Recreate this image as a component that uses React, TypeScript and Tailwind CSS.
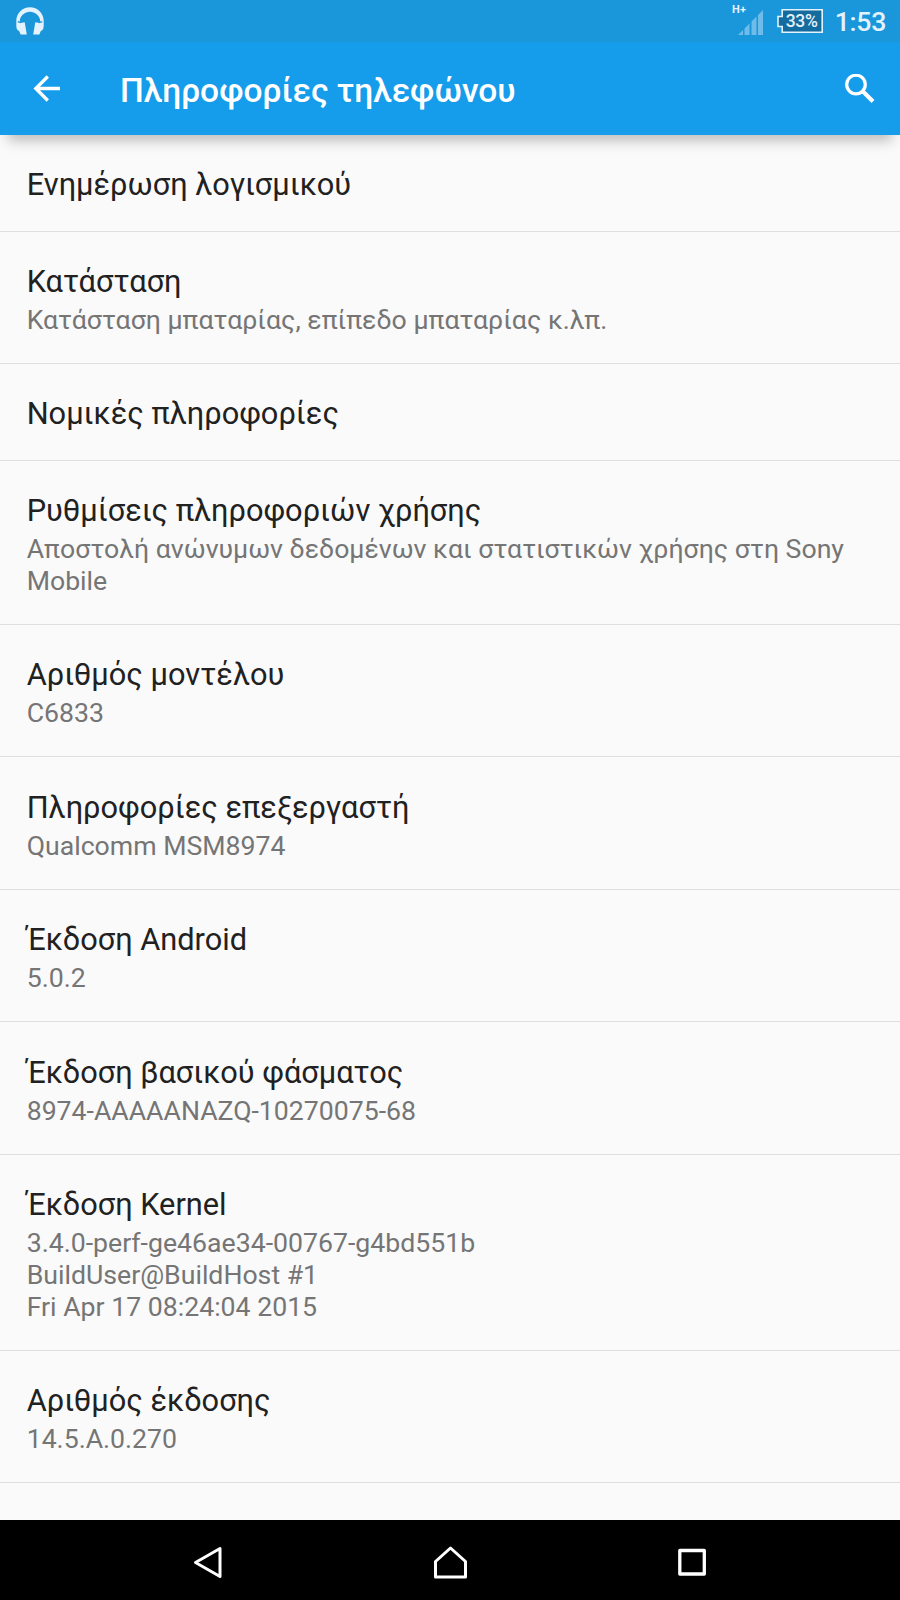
import { clsx } from "clsx";

interface InfoItem {
  title: string;
  summary?: string[];
  height: string;
}

const items: InfoItem[] = [
  { title: "Ενημέρωση λογισμικού", height: "h-[96.67px]" },
  {
    title: "Κατάσταση",
    summary: ["Κατάσταση μπαταρίας, επίπεδο μπαταρίας κ.λπ."],
    height: "h-[132.5px]",
  },
  { title: "Νομικές πληροφορίες", height: "h-[96.67px]" },
  {
    title: "Ρυθμίσεις πληροφοριών χρήσης",
    summary: ["Αποστολή ανώνυμων δεδομένων και στατιστικών χρήσης στη Sony Mobile"],
    height: "h-[164.17px]",
  },
  { title: "Αριθμός μοντέλου", summary: ["C6833"], height: "h-[132.5px]" },
  { title: "Πληροφορίες επεξεργαστή", summary: ["Qualcomm MSM8974"], height: "h-[132.5px]" },
  { title: "Έκδοση Android", summary: ["5.0.2"], height: "h-[132.5px]" },
  {
    title: "Έκδοση βασικού φάσματος",
    summary: ["8974-AAAAANAZQ-10270075-68"],
    height: "h-[132.5px]",
  },
  {
    title: "Έκδοση Kernel",
    summary: [
      "3.4.0-perf-ge46ae34-00767-g4bd551b",
      "BuildUser@BuildHost #1",
      "Fri Apr 17 08:24:04 2015",
    ],
    height: "h-[195.83px]",
  },
  { title: "Αριθμός έκδοσης", summary: ["14.5.A.0.270"], height: "h-[132.5px]" },
];

function HeadphonesIcon() {
  return (
    <svg width="28" height="28" viewBox="0 0 28 28" className="text-[#e3f2fc]">
      <path
        fill="currentColor"
        d="M14 .2C6.400.2.3 6.200.3 13.700v4.800c0 3 .6 4.600 2.900 5.600l1.400 3.500h6.200L8.700 15.300l-4.200.6-.7-2.500C4.500 8.300 8.900 4.700 14 4.700s9.500 3.600 10.200 8.700l-.7 2.500-4.200-.6-2.100 12.300h6.200l1.400-3.500c2.300-1 2.900-2.600 2.900-5.600v-4.800C27.700 6.200 21.600.2 14 .2Z"
      />
      <path stroke="#1a96db" strokeWidth="1.400" d="M1.800 14.700l3.200 1M26.200 14.700l-3.200 1" />
    </svg>
  );
}

function SignalIcon() {
  return (
    <svg width="26" height="25" viewBox="0 0 26 25" fill="#6ebcea">
      <path d="M0 25l5-5v5zM6.500 18.500l5-5V25h-5zM13.500 11.500l5-5V25h-5zM20 5l5-5v25h-5z" />
    </svg>
  );
}

function StatusBar() {
  return (
    <div className="flex h-[42px] items-start justify-between bg-[#1a96db] pl-4 pr-[14px] text-[#e3f2fc]">
      <div className="pt-[7px]">
        <HeadphonesIcon />
      </div>
      <div className="flex">
        <span className="mt-[4px] text-[11px] leading-3 font-bold tracking-[0.2px]">H+</span>
        <div className="-ml-[8.5px] mt-[9.500px]">
          <SignalIcon />
        </div>
        <div className="relative ml-[13px] mt-[9px] h-6 w-[46px]">
          <svg width="46" height="24" viewBox="0 0 46 24" className="absolute inset-0">
            <path
              d="M5.200 .8H45.200V23.200H5.200V17.500H1V7.500H5.200Z"
              fill="#146b9d"
              stroke="#e3f2fc"
              strokeWidth="1.600"
            />
          </svg>
          <span className="absolute left-[9px] top-0 text-[17.500px] leading-6 font-medium tracking-[-0.3px]">
            33%
          </span>
        </div>
        <span className="ml-3 mt-[7px] text-[26.67px] leading-[31px] font-medium tracking-[-0.3px]">
          1:53
        </span>
      </div>
    </div>
  );
}

function AppBar() {
  return (
    <header className="flex h-[93px] items-center bg-[#159ceb] text-white">
      <button aria-label="Πίσω" className="ml-[33px]">
        <svg width="28" height="28" viewBox="0 0 28 28" fill="none" stroke="currentColor" strokeWidth="3.300">
          <path d="M14.800 1.500L2.800 13.500l12 12M2.800 13.500H27" />
        </svg>
      </button>
      <h1 className="ml-[59px] mt-[5px] flex-1 text-[33.500px] leading-10 font-medium">
        Πληροφορίες τηλεφώνου
      </h1>
      <button aria-label="Αναζήτηση" className="mr-[25px]">
        <svg width="30" height="30" viewBox="0 0 30 30" fill="none" stroke="currentColor">
          <circle cx="11" cy="10.500" r="9.300" strokeWidth="3.200" />
          <path d="M18 17.500l10 10" strokeWidth="4" />
        </svg>
      </button>
    </header>
  );
}

function InfoRow({ item }: { item: InfoItem }) {
  return (
    <li
      className={clsx(
        "flex flex-col justify-center border-b border-[#dfdfdf] pl-[26.67px] pr-[26px]",
        item.summary ? "pt-1.5" : "pt-1",
        item.height
      )}
    >
      <div className="text-[30.75px] leading-[35.4px] text-[#212121]">{item.title}</div>
      {item.summary && (
        <div className="mt-[5.500px] text-[26.67px] leading-[31.67px] text-[#757575]">
          {item.summary.map((line) => (
            <p key={line}>{line}</p>
          ))}
        </div>
      )}
    </li>
  );
}

function NavBar() {
  return (
    <nav className="flex h-20 items-center gap-[210px] bg-black pt-1 pl-[193px] text-white">
      <button aria-label="Πίσω">
        <svg width="30" height="34" viewBox="0 0 30 34" fill="none" stroke="currentColor" strokeWidth="3">
          <path strokeLinejoin="round" d="M27 3.500v28L2.500 17.500Z" />
        </svg>
      </button>
      <button aria-label="Αρχική οθόνη">
        <svg width="34" height="34" viewBox="0 0 34 34" fill="none" stroke="currentColor" strokeWidth="3">
          <path strokeLinejoin="round" d="M2.500 16.500L17.500 3l15 13.500v15.500h-30Z" />
        </svg>
      </button>
      <button aria-label="Πρόσφατα">
        <svg width="30" height="28" viewBox="0 0 30 28" fill="none" stroke="currentColor" strokeWidth="3.300">
          <path strokeLinejoin="round" d="M2.800 2.500h24.500v23.500H2.800Z" />
        </svg>
      </button>
    </nav>
  );
}

export default function App() {
  return (
    <div className="flex h-[1600px] w-[900px] flex-col overflow-hidden bg-[#fafafa] font-['Roboto','Noto_Sans',sans-serif]">
      <div className="relative z-10 shadow-[0_14px_12px_-8px_rgba(0,0,0,0.24)]">
        <StatusBar />
        <AppBar />
      </div>
      <ul className="flex-1">
        {items.map((item) => (
          <InfoRow key={item.title} item={item} />
        ))}
      </ul>
      <NavBar />
    </div>
  );
}
